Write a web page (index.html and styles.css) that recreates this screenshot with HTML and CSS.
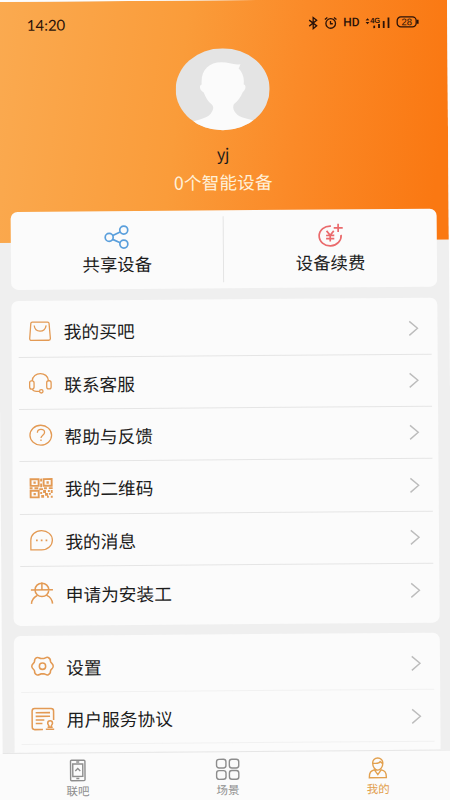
FILE: index.html
```html
<!DOCTYPE html>
<html lang="zh-CN">
<head>
<meta charset="utf-8">
<title>我的</title>
<link rel="stylesheet" href="styles.css">
</head>
<body>
<div class="app">
  <main class="screen">
    <header class="header">
      <div class="status">
        <span class="clock">14:20</span>
        <div class="status-icons">
          <svg width="10" height="13" viewBox="0 0 10 13"><path d="M1 3.5 8.5 9.3 5 12V1l3.5 2.7L1 9.5"/></svg>
          <svg class="alarm" width="13" height="13" viewBox="0 0 13 13"><circle cx="6.5" cy="7" r="4.8"/><path d="M6.3 4.5V7.3H8.6M.7 3 3.2 1M12.3 3 9.8 1"/></svg>
          <span class="hd">HD</span>
          <svg class="signal" width="25" height="13" viewBox="0 0 25 13"><path class="solid" d="M.4 4.2 2.3 2l1.900 2.200zM.4 5.800 2.300 8l1.900-2.200z"/><path class="bars" d="M9 9.500V12M13.800 8V12M18.500 5V12M23.300 1.500V12"/><text x="5" y="7">4G</text></svg>
          <svg class="battery" width="23" height="12" viewBox="0 0 23 12"><rect x="1" y="1" width="19" height="10" rx="3.8"/><path class="bars" d="M21.5 4V8"/><text x="5.300" y="9.300">28</text></svg>
        </div>
      </div>
      <div class="profile">
        <svg class="avatar" viewBox="0 0 94 82" preserveAspectRatio="none"><defs><clipPath id="oval"><ellipse cx="47" cy="41" rx="47" ry="41"/></clipPath></defs><g clip-path="url(#oval)"><rect width="94" height="82" fill="#e4e4e4"/><path fill="#fbfbfb" d="M10 76c8-5 21-5 25-11 3-4 3-7 1-9-4-3-6-7-8-12-4-2-5-7-2-8C25 22 33 14 46 14c7 0 12 3 19 2-1 2-1 3-2 4 4 4 6 10 5 16 3 1 2 6-1 8-2 5-5 9-9 12-1 3-1 5 2 9 5 6 14 5 24 10v12H10z"/></g></svg>
        <div class="name">yj</div>
        <div class="count">0个智能设备</div>
      </div>
    </header>

    <section class="card quick">
      <div class="quick-item">
        <svg class="quick-icon share" viewBox="0 0 26 24"><circle cx="5.4" cy="12.2" r="4"/><circle cx="20" cy="5" r="4"/><circle cx="20" cy="19" r="4"/><path d="M9 10.4 16.4 6.8M8.8 14.2l7.6 3.4"/></svg>
        <span>共享设备</span>
      </div>
      <div class="quick-item">
        <svg class="quick-icon renew" viewBox="0 0 26 24"><path d="M13.200 2.600A11 9.900 0 1 0 23.300 11.500M16 4.500h9M20.400.3v8.400M8.800 7.400l3.600 4.400L16 7.400M8.300 12h8.200M8.300 15.200h8.200M12.400 12v6"/></svg>
        <span>设备续费</span>
      </div>
    </section>

    <section class="card list">
      <div class="row"><svg class="icon" viewBox="0 0 24 24"><path d="M4 2.500h16a1.500 1.500 0 0 1 1.500 1.300l1.300 16a1.700 1.700 0 0 1-1.700 1.700H2.900a1.700 1.700 0 0 1-1.700-1.700L2.500 3.800A1.500 1.500 0 0 1 4 2.500zM6 6c1 8 11 8 12.500 0"/></svg><span class="label">我的买吧</span><svg class="chevron" viewBox="0 0 10 15"><path d="M.8.5 9 7.500.8 14.500"/></svg></div>
      <div class="row"><svg class="icon" viewBox="0 0 24 24"><rect x=".8" y="9.500" width="4.600" height="8.500" rx="2"/><rect x="18.600" y="9.500" width="4.600" height="8.500" rx="2"/><path d="M3.500 9.500C4-.5 20-.5 20.500 9.500M3.500 18c.5 2.200 3 2.600 7.500 2.600"/><circle cx="12.900" cy="20.400" r="1.800"/></svg><span class="label">联系客服</span><svg class="chevron" viewBox="0 0 10 15"><path d="M.8.5 9 7.500.8 14.500"/></svg></div>
      <div class="row"><svg class="icon" viewBox="0 0 24 24"><ellipse cx="12" cy="12" rx="11.300" ry="10.400"/><path d="M8.500 9.500c0-5 7.500-4.500 7.500-.5 0 3-3.800 3-3.800 6M12.200 16.500v1.600"/></svg><span class="label">帮助与反馈</span><svg class="chevron" viewBox="0 0 10 15"><path d="M.8.5 9 7.500.8 14.500"/></svg></div>
      <div class="row"><svg class="icon qr" viewBox="0 0 24 24"><path d="M1 2.500h8.400v7H1zM14.600 2.500H23v7h-8.400zM1 14.500h8.400v7H1z"/><path class="dots" d="M4 4.900h2.400v2.400H4zM17.600 4.900H20v2.400h-2.400zM4 17h2.400v2.400H4zM11 2h2v3h-2zM11 7h2v4h-2zM0 11h3v2H0zM5 11h4v2H5zM10 12h4v2h-4zM15 11h3v2h-3zM20 11h4v2h-4zM11 16h2v2h-2zM14 14h3v3h-3zM19 14h2v2h-2zM22 14h2v3h-2zM12 19h3v3h-3zM16 17h3v3h-3zM20 17h2v2h-2zM18 20h2v2h-2zM22 20h2v2h-2z"/></svg><span class="label">我的二维码</span><svg class="chevron" viewBox="0 0 10 15"><path d="M.8.5 9 7.500.8 14.500"/></svg></div>
      <div class="row"><svg class="icon" viewBox="0 0 24 24"><path d="M12 2c6.500 0 11.300 4.500 11.300 10S18.500 22 12 22H.8V12C.8 6.500 5.500 2 12 2z"/><path class="dots" d="M6.200 11.200h1.800v1.800H6.200zM11.200 11.200h1.800v1.800h-1.800zM16.200 11.200H18v1.800h-1.800z"/></svg><span class="label">我的消息</span><svg class="chevron" viewBox="0 0 10 15"><path d="M.8.5 9 7.500.8 14.500"/></svg></div>
      <div class="row"><svg class="icon bold" viewBox="0 0 24 24"><path d="M.5 8.500h23M12 .5v8M4.800 8.500a7.200 7 0 0 1 14.400 0c0 4.300-3.500 7-7.200 7s-7.200-2.700-7.200-7zM1 23c.3-4.500 2.500-7 6-8.700M23 23c-.3-4.500-2.500-7-6-8.700"/></svg><span class="label">申请为安装工</span><svg class="chevron" viewBox="0 0 10 15"><path d="M.8.5 9 7.500.8 14.500"/></svg></div>
    </section>

    <section class="card list settings">
      <div class="row"><svg class="icon bold" viewBox="0 0 24 24"><path d="M6 3c2-1 3 1 4.500 1h3C15 4 16 2 18 3s2.500 2 2.300 4c0 2 2.900 2 2.900 5s-2.900 3-2.900 5c.2 2-.3 3-2.300 4s-3-1-4.500-1h-3C9 20 8 22 6 21s-2.500-2-2.300-4c0-2-2.900-2-2.900-5s2.900-3 2.900-5C3.500 5 4 4 6 3z"/><circle cx="12" cy="12" r="3.300"/></svg><span class="label">设置</span><svg class="chevron" viewBox="0 0 10 15"><path d="M.8.5 9 7.500.8 14.500"/></svg></div>
      <div class="row"><svg class="icon bold" viewBox="0 0 24 24"><path d="M12 22.800H3.500a2.700 2.700 0 0 1-2.700-2.700V3.500A2.700 2.700 0 0 1 3.500.8h17a2.700 2.700 0 0 1 2.700 2.700V13M4.500 5.200h15M4.500 9h15M4.500 12.800h9M4.500 16.500h7"/><path d="M15 22.500h8.700M16.800 20.500h5.400M18.500 20c0-2-1.500-2-1.500-3.800a2.500 2.500 0 0 1 5 0c0 1.800-1.500 1.800-1.500 3.800"/></svg><span class="label">用户服务协议</span><svg class="chevron" viewBox="0 0 10 15"><path d="M.8.5 9 7.500.8 14.500"/></svg></div>
      <div class="row"></div>
    </section>
  </main>

  <nav class="tabs">
    <div class="tab"><svg class="tab-icon" viewBox="0 0 24 24"><rect x="4.800" y="1.800" width="14.400" height="20.400" rx="1"/><path d="M7 5.500h10v12.500H7zM10.500 3.500h3M9.500 12.500 12 10l2.500 2.500M10.500 20h3"/></svg><span>联吧</span></div>
    <div class="tab"><svg class="tab-icon" viewBox="0 0 24 24"><rect x=".8" y="2" width="9.400" height="8.700" rx="2.500"/><rect x="13.600" y="2" width="9.400" height="8.700" rx="2.500"/><rect x=".8" y="13.300" width="9.400" height="8.700" rx="2.500"/><rect x="13.600" y="13.300" width="9.400" height="8.700" rx="2.500"/></svg><span>场景</span></div>
    <div class="tab active"><svg class="tab-icon" viewBox="0 0 24 24"><path d="M7 7.500C6 0 18 0 17 7.500c0 3.500-2.500 6.500-5 6.500S7 11 7 7.500zM7.200 7C11 7.500 14 6.500 14.500 5.500L17 7.500M9 13.500C5 15 3.500 15.500 3.500 21.500h17c0-6-1.500-6.500-5.500-8M8.800 14 12 18.500 15.200 14"/></svg><span>我的</span></div>
  </nav>
</div>
</body>
</html>
```
FILE: styles.css
```css
* { box-sizing: border-box; }

html, body {
  width: 450px;
  height: 800px;
  margin: 0;
  overflow: hidden;
  background: #fdfdfd;
}

body {
  display: flow-root;
  font-family: "Noto Sans CJK SC", sans-serif;
  color: #1c1c1c;
}

svg {
  display: block;
  flex: none;
  overflow: visible;
  fill: none;
  stroke: currentColor;
}

/* The whole sheet sits at a very slight tilt. */
.app {
  width: 450.3px;
  margin: 2px 0 0 -3px;
  transform-origin: 3px -2px;
  transform: matrix(1, -0.0077, 0.0075, 1, 0, 0);
}

.screen {
  height: 751px;
  overflow: hidden;
  background: #efefef;
}

.header {
  height: 241px;
  padding: 11px 28px 0 29.5px;
  background: linear-gradient(97deg, #faaa50 0%, #fa9c3a 40%, #fb8a28 65%, #fa7812 96%);
}

.status {
  display: flex;
  align-items: center;
  justify-content: space-between;
  height: 24px;
  color: #2a1208;
}

.clock {
  font: 15px/24px Lato, sans-serif;
}

.status-icons {
  display: flex;
  align-items: center;
  gap: 6px;
  stroke-width: 1.3;
}

.status-icons text {
  fill: currentColor;
  stroke: none;
  font: 700 7.5px "Liberation Sans", sans-serif;
}

.status-icons .battery text { font-weight: 400; font-size: 9.5px; }
.solid { fill: currentColor; stroke: none; }
.bars { stroke-width: 1.8; }

.hd {
  font: 500 12px/24px Roboto, sans-serif;
}

.profile {
  display: flex;
  flex-direction: column;
  align-items: center;
  padding: 12.500px 1.800px 0 0;
}

.avatar {
  width: 94px;
  height: 82px;
  stroke: none;
}

.name {
  margin-top: 11.5px;
  font-size: 16px;
  line-height: 24px;
}

.count {
  margin-top: 5px;
  font-size: 17.600px;
  line-height: 24px;
  letter-spacing: .2px;
  color: #fff0d8;
}

.card {
  width: 425.500px;
  margin-left: 12.200px;
  border-radius: 7px;
  background: #fbfbfb;
}

.quick {
  display: flex;
  height: 78px;
  margin-top: -31.500px;
  padding: 6px 0;
}

.quick-item {
  flex: 1;
  display: flex;
  flex-direction: column;
  align-items: center;
  padding-top: 8px;
  font-size: 17.400px;
  line-height: 26px;
}

.quick-item + .quick-item { border-left: 1px solid #e4e4e4; }

.quick-icon {
  width: 26px;
  height: 24px;
  margin-bottom: 2.500px;
  stroke-width: 1.700;
}

.share { color: #5a9fdc; }
.renew { color: #ea6a6c; }

.list {
  height: 325px;
  margin-top: 11px;
  padding: 4.600px 6px 0 7px;
}

.settings { margin-top: 10.500px; }

.row {
  display: flex;
  align-items: center;
  height: 52.450px;
  padding: .6px 12.300px 0 10.300px;
  border-bottom: 1.200px solid #e5e5e5;
}

.row:last-child { border-bottom: 0; }
.settings .row { border-bottom-color: #f1f1f1; }

.icon {
  width: 23px;
  height: 23px;
  margin-right: 11.800px;
  color: #e39a54;
  stroke-width: 1.350;
}

.bold { stroke-width: 1.600; }
.qr { stroke-width: 2; }
.dots { fill: currentColor; stroke: none; }

.label {
  flex: 1;
  font-size: 17.700px;
  line-height: 26px;
}

.chevron {
  width: 10px;
  height: 15px;
  color: #bcbcbc;
  stroke-width: 1.400;
}

.tabs {
  display: flex;
  height: 60px;
  border-top: 1px solid #e6e6e6;
  background: #fbfbfb;
  box-shadow: -10px 1px #fbfbfb, 10px 1px #fbfbfb;
}

.tab {
  flex: 1;
  display: flex;
  flex-direction: column;
  align-items: center;
  padding-top: 5px;
  font-size: 11.500px;
  line-height: 16px;
  color: #8d8d8d;
}

.tab-icon {
  width: 24px;
  height: 24px;
  margin-bottom: .2px;
  stroke-width: 1.400;
}

.active { color: #e2a04e; }
```
